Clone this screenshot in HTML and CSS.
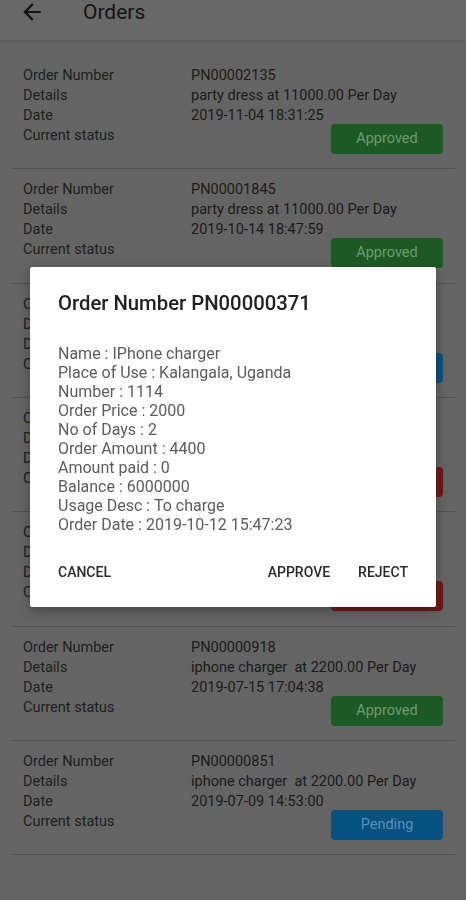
FILE: index.html
```html
<!DOCTYPE html>
<html lang="en">
<head>
    <meta charset="UTF-8">
    <meta name="viewport" content="width=device-width">
    <title>Orders</title>
    <link rel="stylesheet" href="styles.css">
</head>
<body>
<!--page is shown dimmed, as behind an open dialog-->
<div class="page">
    <!--toolbar-->
    <div class="toolbar">
        <svg class="back" viewBox="0 0 24 24"><path d="M20 11H7.83l5.59-5.59L12 4l-8 8 8 8 1.41-1.41L7.83 13H20v-2z"/></svg>
        <span class="title">Orders</span>
    </div>

    <!--order list-->
    <div class="list">
        <div class="order">
            <span class="label">Order Number</span><span class="value">PN00002135</span>
            <span class="label">Details</span><span class="value">party dress at 11000.00 Per Day</span>
            <span class="label">Date</span><span class="value">2019-11-04 18:31:25</span>
            <span class="label">Current status</span><span class="status"><em class="approved">Approved</em></span>
        </div>
        <div class="order">
            <span class="label">Order Number</span><span class="value">PN00001845</span>
            <span class="label">Details</span><span class="value">party dress at 11000.00 Per Day</span>
            <span class="label">Date</span><span class="value">2019-10-14 18:47:59</span>
            <span class="label">Current status</span><span class="status"><em class="approved">Approved</em></span>
        </div>
        <div class="order">
            <span class="label">Order Number</span><span class="value">PN00000371</span>
            <span class="label">Details</span><span class="value">IPhone charger at 2000.00 Per Day</span>
            <span class="label">Date</span><span class="value">2019-10-12 15:47:23</span>
            <span class="label">Current status</span><span class="status"><em class="pending">Pending</em></span>
        </div>
        <div class="order">
            <span class="label">Order Number</span><span class="value">PN00000362</span>
            <span class="label">Details</span><span class="value">iphone charger  at 2200.00 Per Day</span>
            <span class="label">Date</span><span class="value">2019-09-28 10:12:41</span>
            <span class="label">Current status</span><span class="status"><em class="rejected">Rejected</em></span>
        </div>
        <div class="order">
            <span class="label">Order Number</span><span class="value">PN00000355</span>
            <span class="label">Details</span><span class="value">iphone charger  at 2200.00 Per Day</span>
            <span class="label">Date</span><span class="value">2019-08-02 09:30:16</span>
            <span class="label">Current status</span><span class="status"><em class="rejected">Rejected</em></span>
        </div>
        <div class="order">
            <span class="label">Order Number</span><span class="value">PN00000918</span>
            <span class="label">Details</span><span class="value">iphone charger&nbsp; at 2200.00 Per Day</span>
            <span class="label">Date</span><span class="value">2019-07-15 17:04:38</span>
            <span class="label">Current status</span><span class="status"><em class="approved">Approved</em></span>
        </div>
        <div class="order">
            <span class="label">Order Number</span><span class="value">PN00000851</span>
            <span class="label">Details</span><span class="value">iphone charger&nbsp; at 2200.00 Per Day</span>
            <span class="label">Date</span><span class="value">2019-07-09 14:53:00</span>
            <span class="label">Current status</span><span class="status"><em class="pending">Pending</em></span>
        </div>
    </div>
</div>

<!--dialog over the list-->
<div class="overlay">
    <div class="dialog">
        <h2>Order Number PN00000371</h2>
        <ul>
            <li>Name : IPhone charger</li>
            <li>Place of Use : Kalangala, Uganda</li>
            <li>Number : 1114</li>
            <li>Order Price : 2000</li>
            <li>No of Days : 2</li>
            <li>Order Amount : 4400</li>
            <li>Amount paid : 0</li>
            <li>Balance : 6000000</li>
            <li>Usage Desc : To charge</li>
            <li>Order Date : 2019-10-12 15:47:23</li>
        </ul>
        <div class="actions">
            <a href="#" class="cancel">Cancel</a>
            <a href="#">Approve</a>
            <a href="#">Reject</a>
        </div>
    </div>
</div>
</body>
</html>
```

FILE: styles.css
```css
*{
    margin: 0;
    padding: 0;
    list-style: none;
    box-sizing: border-box;
}

body{
    font-family: Roboto, "Liberation Sans", sans-serif;
    background: #646464;
    color: #1c1c1c;
}

/* page colours as seen under the dialog's dark layer */
.toolbar{
    height: 40px;
    padding-bottom: 16px;
    display: flex;
    align-items: center;
    background: #686868;
    box-shadow: 0 1px 3px rgba(0,0,0,0.15);
}
.toolbar .back{
    width: 26px;
    height: 26px;
    margin-left: 19px;
    fill: #121212;
}
.toolbar .title{
    margin-left: 38px;
    font-size: 21px;
    color: #141414;
}

.list{
    margin: 0 11px 0 12px;
    padding-top: 26px;
}
.order{
    display: grid;
    grid-template-columns: 168px 1fr;
    padding: 11px 12px 14.33px 11px;
    border-bottom: 1px solid #525252;
    font-size: 14.5px;
    line-height: 20px;
}
.order:first-child{
    padding-top: 0;
}
.order .label{
    color: #1e1e1e;
}
.order .value{
    color: #1a1a1a;
}
.order .status{
    display: flex;
    justify-content: flex-end;
}
.order em{
    font-style: normal;
    width: 112px;
    height: 30px;
    margin-top: -2px;
    border-radius: 4px;
    display: flex;
    justify-content: center;
    align-items: center;
    font-size: 14.5px;
}
.order .approved{
    background: #1c5a25;
    color: #6e9a72;
}
.order .pending{
    background: #05517f;
    color: #5d90b5;
}
.order .rejected{
    background: #751717;
    color: #b07070;
}

.overlay{
    position: fixed;
    top: 0;
    left: 0;
    width: 100%;
    height: 100%;
    display: flex;
    justify-content: center;
    align-items: flex-start;
    padding-top: 267px;
}
.dialog{
    width: 406px;
    background: #fff;
    border-radius: 2px;
    box-shadow: 0 4px 12px rgba(0,0,0,0.3);
    padding: 24px 28px 17px;
}
.dialog h2{
    font-size: 20.3px;
    line-height: 24px;
    font-weight: 500;
    color: #212121;
}
.dialog ul{
    margin-top: 29px;
    font-size: 16px;
    line-height: 19px;
    color: #5c5c5c;
}
.dialog .actions{
    margin-top: 20px;
    height: 36px;
    display: flex;
    align-items: center;
    gap: 28px;
}
.dialog .actions a{
    text-decoration: none;
    text-transform: uppercase;
    font-size: 14px;
    font-weight: 500;
    color: #2a2a2a;
}
.dialog .actions .cancel{
    margin-right: auto;
}
```
